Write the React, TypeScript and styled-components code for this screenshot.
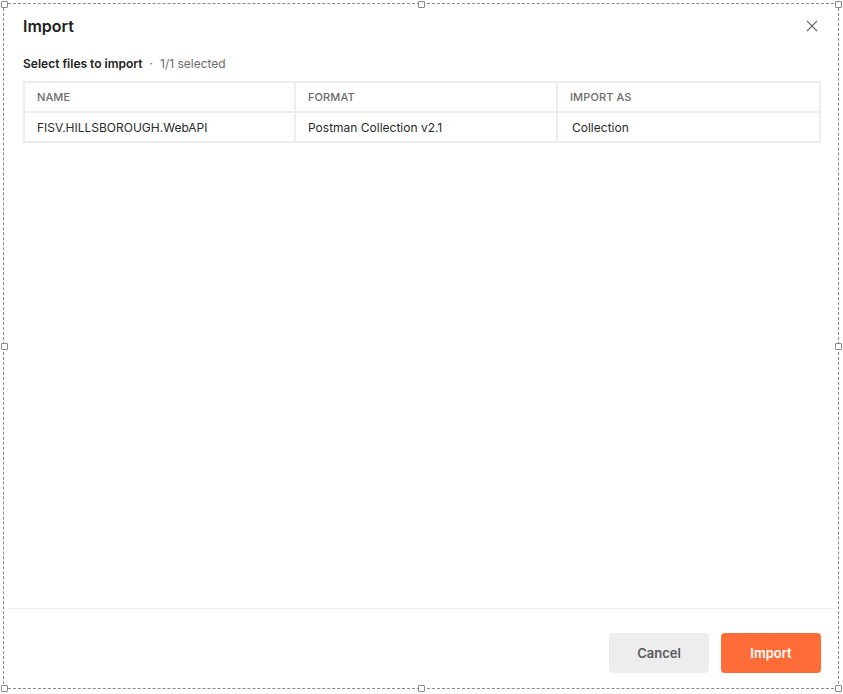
import styled, {createGlobalStyle} from 'styled-components';

const GlobalStyle = createGlobalStyle`
html, body {
    margin: 0;
    padding: 0;
    background: #ffffff;
}
body {
    font-family: Inter, "Noto Sans", "Liberation Sans", sans-serif;
    color: #212121;
}
`

const Page = styled.div`
position: relative;
display: flex;
flex-direction: column;
width: 843px;
height: 694px;
background: #ffffff;
overflow: hidden;
`

const Header = styled.div`
display: flex;
align-items: center;
justify-content: space-between;
padding: 14px 25px 0 23px;
height: 24px;
`

const Title = styled.h1`
margin: 0;
font-size: 16px;
line-height: 24px;
font-weight: 600;
color: #212121;
`

const CloseButton = styled.button`
display: flex;
align-items: center;
justify-content: center;
width: 12px;
height: 12px;
padding: 0;
border: 0;
background: transparent;
cursor: pointer;
`

const SubTitle = styled.div`
display: flex;
align-items: center;
gap: 7px;
margin: 18px 0 0 23px;
font-size: 12px;
line-height: 16px;
`

const SubStrong = styled.span`
font-weight: 600;
color: #212121;
`

const SubMuted = styled.span`
color: #6b6b6b;
`

const Table = styled.table`
margin: 9px 0 0 23px;
width: 798px;
border-collapse: collapse;
table-layout: fixed;
border: 2px solid #ededed;
`

const HeadCell = styled.th<{ $width: number }>`
box-sizing: border-box;
width: ${p => p.$width}px;
height: 30px;
padding: 0 12px;
border: 2px solid #ededed;
text-align: left;
font-size: 11px;
font-weight: 500;
color: #6b6b6b;
text-transform: uppercase;
letter-spacing: 0.1px;
`

const Cell = styled.td<{ $shift?: number }>`
box-sizing: border-box;
height: 30px;
padding: 0 12px 0 ${p => 12 + (p.$shift || 0)}px;
border: 2px solid #ededed;
font-size: 12px;
color: #2b2b2b;
white-space: nowrap;
`

const Spacer = styled.div`
flex: 1;
`

const Footer = styled.div`
display: flex;
justify-content: flex-end;
gap: 12px;
margin: 0 8px;
padding: 24px 14px 21px;
border-top: 1px solid #ededed;
`

const Button = styled.button<{ $primary?: boolean }>`
width: 100px;
height: 40px;
border: 0;
border-radius: 4px;
font-family: inherit;
font-size: 13px;
font-weight: 600;
background: ${p => p.$primary ? '#ff6c37' : '#ededed'};
color: ${p => p.$primary ? '#ffffff' : '#5a5a5a'};
cursor: pointer;
`

const Frame = styled.div`
position: absolute;
left: 3px;
top: 3px;
width: 834px;
height: 684px;
border: 1px dashed #8a8a8a;
pointer-events: none;
`

const Handle = styled.div<{ $x: string; $y: string }>`
position: absolute;
left: ${p => p.$x};
top: ${p => p.$y};
width: 5px;
height: 5px;
margin: -3px 0 0 -3px;
background: #ffffff;
border: 1px solid #8a8a8a;
border-radius: 1px;
`

const handles: [string, string][] = [
    ['0%', '0%'], ['50%', '0%'], ['100%', '0%'],
    ['0%', '50%'], ['100%', '50%'],
    ['0%', '100%'], ['50%', '100%'], ['100%', '100%'],
];

function CloseIcon() {
    return (
        <svg width="12" height="12" viewBox="0 0 12 12">
            <path d="M1 1 L11 11 M11 1 L1 11" stroke="#6b6b6b" strokeWidth="1.1" fill="none" />
        </svg>
    );
}

export default function App() {
    return (
        <Page>
            <GlobalStyle />
            <Header>
                <Title>Import</Title>
                <CloseButton aria-label="Close"><CloseIcon /></CloseButton>
            </Header>
            <SubTitle>
                <SubStrong>Select files to import</SubStrong>
                <SubMuted>·</SubMuted>
                <SubMuted>1/1 selected</SubMuted>
            </SubTitle>
            <Table>
                <thead>
                    <tr>
                        <HeadCell $width={271}>Name</HeadCell>
                        <HeadCell $width={262}>Format</HeadCell>
                        <HeadCell $width={263}>Import as</HeadCell>
                    </tr>
                </thead>
                <tbody>
                    <tr>
                        <Cell>FISV.HILLSBOROUGH.WebAPI</Cell>
                        <Cell>Postman Collection v2.1</Cell>
                        <Cell $shift={2}>Collection</Cell>
                    </tr>
                </tbody>
            </Table>
            <Spacer />
            <Footer>
                <Button>Cancel</Button>
                <Button $primary>Import</Button>
            </Footer>
            <Frame>
                {handles.map(([x, y]) => <Handle key={x + y} $x={x} $y={y} />)}
            </Frame>
        </Page>
    );
}
